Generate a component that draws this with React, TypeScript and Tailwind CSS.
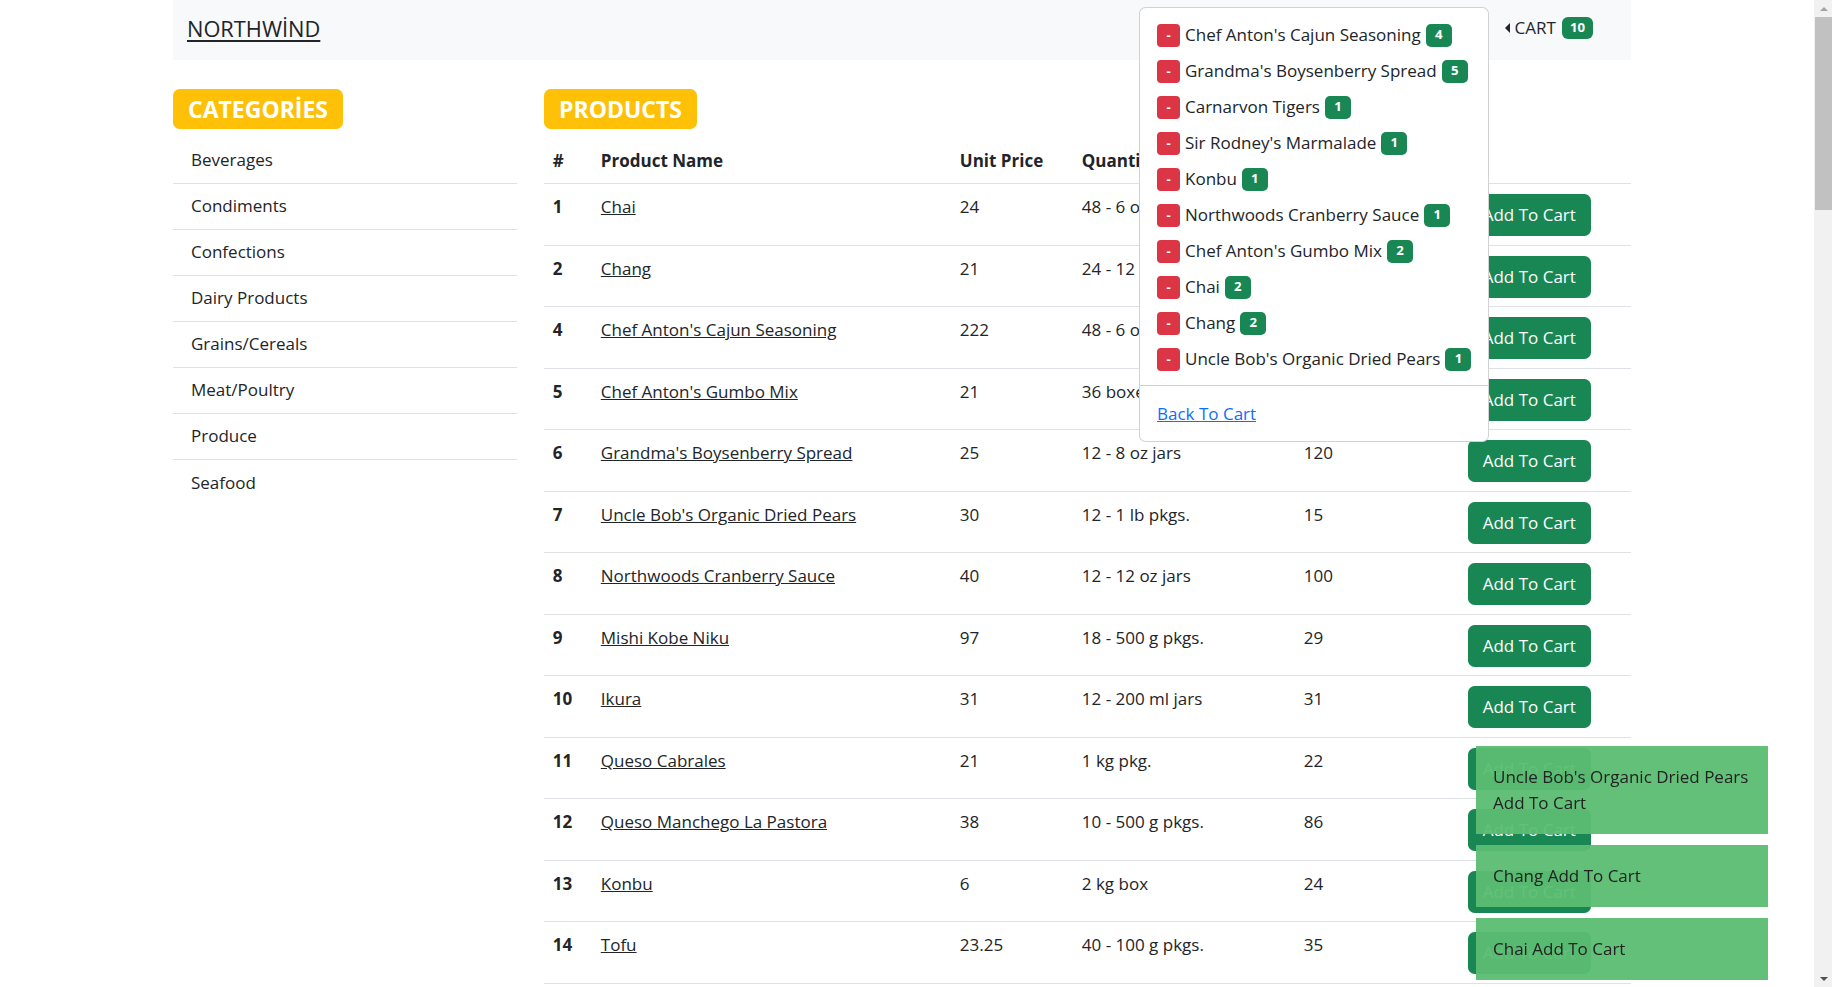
import React from "react";

const categories = [
  "Beverages",
  "Condiments",
  "Confections",
  "Dairy Products",
  "Grains/Cereals",
  "Meat/Poultry",
  "Produce",
  "Seafood",
];

const products = [
  { id: 1, name: "Chai", price: "24", qty: "48 - 6 oz jars", stock: "39" },
  { id: 2, name: "Chang", price: "21", qty: "24 - 12 oz bottles", stock: "17" },
  { id: 4, name: "Chef Anton's Cajun Seasoning", price: "222", qty: "48 - 6 oz jars", stock: "53" },
  { id: 5, name: "Chef Anton's Gumbo Mix", price: "21", qty: "36 boxes", stock: "0" },
  { id: 6, name: "Grandma's Boysenberry Spread", price: "25", qty: "12 - 8 oz jars", stock: "120" },
  { id: 7, name: "Uncle Bob's Organic Dried Pears", price: "30", qty: "12 - 1 lb pkgs.", stock: "15" },
  { id: 8, name: "Northwoods Cranberry Sauce", price: "40", qty: "12 - 12 oz jars", stock: "100" },
  { id: 9, name: "Mishi Kobe Niku", price: "97", qty: "18 - 500 g pkgs.", stock: "29" },
  { id: 10, name: "Ikura", price: "31", qty: "12 - 200 ml jars", stock: "31" },
  { id: 11, name: "Queso Cabrales", price: "21", qty: "1 kg pkg.", stock: "22" },
  { id: 12, name: "Queso Manchego La Pastora", price: "38", qty: "10 - 500 g pkgs.", stock: "86" },
  { id: 13, name: "Konbu", price: "6", qty: "2 kg box", stock: "24" },
  { id: 14, name: "Tofu", price: "23.25", qty: "40 - 100 g pkgs.", stock: "35" },
  { id: 15, name: "Genen Shouyu", price: "15.5", qty: "24 - 250 ml bottles", stock: "39" },
  { id: 16, name: "Pavlova", price: "17.45", qty: "32 - 500 g boxes", stock: "29" },
];

const cart = [
  { name: "Chef Anton's Cajun Seasoning", count: 4 },
  { name: "Grandma's Boysenberry Spread", count: 5 },
  { name: "Carnarvon Tigers", count: 1 },
  { name: "Sir Rodney's Marmalade", count: 1 },
  { name: "Konbu", count: 1 },
  { name: "Northwoods Cranberry Sauce", count: 1 },
  { name: "Chef Anton's Gumbo Mix", count: 2 },
  { name: "Chai", count: 2 },
  { name: "Chang", count: 2 },
  { name: "Uncle Bob's Organic Dried Pears", count: 1 },
];

const toasts = ["Uncle Bob's Organic Dried Pears", "Chang", "Chai"];

const cell = "px-[8.8px] pb-[8.5px] pt-[10px]";
const head = "px-[8.8px] pb-[9px] pt-[11px] font-bold";

const App = () => {
  return (
    <div className="flex h-screen overflow-hidden bg-white font-['Open_Sans','Noto_Sans',sans-serif] text-[17px] leading-[26.4px] text-[#212529]">
      <div className="flex-1 overflow-hidden">
        <div className="ml-[173px] w-[1458px]">
          {/* navbar */}
          <nav className="relative flex h-[60px] items-center justify-between bg-[#f8f9fa] pb-[2px] pl-[14px] pr-[38px]">
            <a href="#" className="text-[21.8px] leading-[30px] text-[#212529] underline underline-offset-[3px]">
              NORTHWİND
            </a>
            <div className="flex items-center pb-[2px]">
              <span className="mr-[5px] h-0 w-0 border-y-[5px] border-r-[5px] border-y-transparent border-r-[#212529]" />
              <span>CART</span>
              <span className="ml-[6px] inline-flex h-[22px] items-center rounded-[6px] bg-[#198754] px-[8px] text-[13.2px] font-bold leading-none text-white">
                10
              </span>
            </div>

            {/* cart dropdown */}
            <div className="absolute left-[966px] top-[7px] z-10 w-[350px] rounded-[6.6px] border border-[rgba(0,0,0,0.175)] bg-white pb-[9px] pt-[9px]">
              {cart.map((item) => (
                <div key={item.name} className="flex h-[36px] items-center whitespace-nowrap px-[17px]">
                  <button className="mr-[5px] flex h-[23px] w-[23px] shrink-0 items-center justify-center rounded-[4px] bg-[#dc3545] text-[13px] font-bold leading-none text-white">
                    -
                  </button>
                  <span>{item.name}</span>
                  <span className="ml-[5px] inline-flex h-[23px] min-w-[26px] shrink-0 items-center justify-center rounded-[5px] bg-[#198754] px-[8px] text-[13.2px] font-bold leading-none text-white">
                    {item.count}
                  </span>
                </div>
              ))}
              <div className="mb-[10px] mt-[8px] border-t border-[rgba(0,0,0,0.175)]" />
              <div className="flex h-[36px] items-center px-[17px]">
                <a href="#" className="text-[#0d6efd] underline">
                  Back To Cart
                </a>
              </div>
            </div>
          </nav>

          <div className="mt-[29px] flex gap-[27px]">
            {/* categories */}
            <aside className="w-[344px] shrink-0">
              <span className="inline-flex h-[40px] items-center rounded-[6.6px] bg-[#ffc107] px-[15px] text-[23px] font-bold leading-none text-white">
                CATEGORİES
              </span>
              <ul className="mt-[9px]">
                {categories.map((c) => (
                  <li
                    key={c}
                    className="flex h-[46px] items-center border-b border-[#dee2e6] pl-[18px] last:border-b-0"
                  >
                    {c}
                  </li>
                ))}
              </ul>
            </aside>

            {/* products */}
            <main className="w-[1087px] shrink-0">
              <span className="inline-flex h-[40px] items-center rounded-[6.6px] bg-[#ffc107] px-[15px] text-[23px] font-bold leading-none text-white">
                PRODUCTS
              </span>
              <table className="mt-[8px] w-[1087px] table-fixed border-collapse text-left">
                <thead>
                  <tr className="border-b border-[#dee2e6]">
                    <th className={`w-[48px] ${head}`}>#</th>
                    <th className={`w-[359px] ${head}`}>Product Name</th>
                    <th className={`w-[122px] ${head}`}>Unit Price</th>
                    <th className={`w-[222px] ${head}`}>Quantity Per Unit</th>
                    <th className={`w-[164px] ${head}`}>Units In Stock</th>
                    <th className={`w-[172px] ${head}`}></th>
                  </tr>
                </thead>
                <tbody>
                  {products.map((p) => (
                    <tr key={p.id} className="border-b border-[#dee2e6] align-top">
                      <td className={`${cell} font-bold`}>{p.id}</td>
                      <td className={cell}>
                        <a href="#" className="text-[#212529] underline">
                          {p.name}
                        </a>
                      </td>
                      <td className={cell}>{p.price}</td>
                      <td className={cell}>{p.qty}</td>
                      <td className={cell}>{p.stock}</td>
                      <td className={cell}>
                        <button className="h-[42px] w-[123px] rounded-[6.6px] bg-[#198754] text-white">
                          Add To Cart
                        </button>
                      </td>
                    </tr>
                  ))}
                </tbody>
              </table>
            </main>
          </div>
        </div>
      </div>

      {/* scrollbar */}
      <div className="flex w-[18px] shrink-0 flex-col bg-[#f1f1f1] pl-[1px]">
        <div className="flex h-[17px] items-center justify-center">
          <span className="h-0 w-0 border-x-[4px] border-b-[4px] border-x-transparent border-b-[#a3a3a3]" />
        </div>
        <div className="h-[193px] bg-[#c1c1c1]" />
        <div className="flex-1" />
        <div className="flex h-[17px] items-center justify-center">
          <span className="h-0 w-0 border-x-[4px] border-t-[4px] border-x-transparent border-t-[#505050]" />
        </div>
      </div>

      {/* toasts */}
      <div className="fixed bottom-[7px] right-[64px] z-20 flex w-[292px] flex-col gap-[11px]">
        {toasts.map((t) => (
          <div
            key={t}
            className="bg-[rgba(91,189,114,0.95)] py-[18px] pl-[17px] pr-[8px] leading-[26px] text-[#222]"
          >
            {t} Add To Cart
          </div>
        ))}
      </div>
    </div>
  );
};

export default App;
